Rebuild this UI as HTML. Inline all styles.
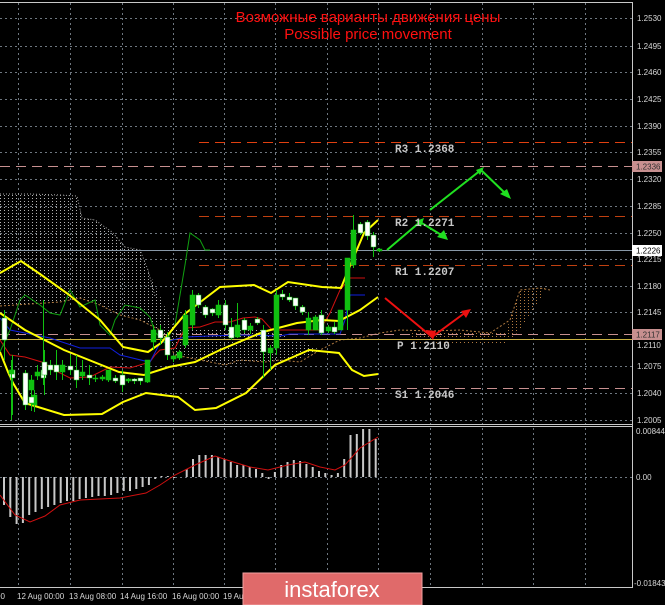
<!DOCTYPE html>
<html><head><meta charset="utf-8"><style>
html,body{margin:0;padding:0;background:#000;width:665px;height:605px;overflow:hidden}
svg{display:block}
.sans{font-family:"Liberation Sans",sans-serif}
.mono{font-family:"Liberation Mono",monospace;font-weight:bold}
</style></head><body>
<svg id="s" width="665" height="605" viewBox="0 0 665 605" xmlns="http://www.w3.org/2000/svg">
<defs>
<pattern id="dots" width="4" height="3" patternUnits="userSpaceOnUse"><rect width="1" height="1" fill="#d0d0d0"/></pattern>
<pattern id="dots2" width="4" height="3" patternUnits="userSpaceOnUse"><rect width="1" height="1" fill="#b07a40"/></pattern>
</defs>
<rect width="665" height="605" fill="#000"/>
<g id="grid" stroke="#8a95a0" stroke-width="1" stroke-dasharray="2,3" opacity="0.8"></g>
<line x1="0" y1="2.5" x2="632" y2="2.5" stroke="#c8c8c8"/>
<line x1="632.5" y1="2" x2="632.5" y2="588" stroke="#c8c8c8"/>
<line x1="0" y1="424.5" x2="632" y2="424.5" stroke="#c8c8c8"/>
<line x1="0" y1="426.5" x2="632" y2="426.5" stroke="#c8c8c8"/>
<line x1="0" y1="587.5" x2="632" y2="587.5" stroke="#c8c8c8"/>
<!-- cloud -->
<polygon points="0,194 77,196 82,218 95,220 112,232 125,247 140,250 148,270 160,296 175,330 200,330 260,330 280,335 300,340 320,350 310,356 280,362 250,363 225,365 200,360 175,355 160,330 140,320 120,315 100,305 80,298 60,302 30,304 0,306" fill="url(#dots)" opacity="0.85"/>
<polygon points="410,333 505,333 510,320 520,290 545,288 540,300 520,330 505,345 410,345" fill="url(#dots2)"/>
<polyline points="0,194 30,194 60,195 77,196 82,218 95,220 112,232 125,247 140,250 148,270 155,296" fill="none" stroke="#aaa" stroke-dasharray="1,2"/>
<polyline points="0,306 30,304 60,302 80,298 100,305 120,315 140,320 160,330 175,355 200,360 225,365 240,360 265,362 280,360 300,362 320,350 340,340 360,338 380,333 400,330 430,331 460,330 490,333 510,320 520,290 540,288 550,290" fill="none" stroke="#b07a40" stroke-dasharray="2,2"/>
<line x1="199" y1="142.5" x2="632" y2="142.5" stroke="#e04010" stroke-dasharray="10,6"/>
<line x1="0" y1="166.5" x2="632" y2="166.5" stroke="#c89090" stroke-dasharray="10,6"/>
<line x1="199" y1="216.5" x2="632" y2="216.5" stroke="#c04010" stroke-dasharray="10,6"/>
<line x1="0" y1="250.5" x2="632" y2="250.5" stroke="#8898a8"/>
<line x1="199" y1="265.5" x2="632" y2="265.5" stroke="#c04010" stroke-dasharray="10,6"/>
<line x1="0" y1="334.5" x2="632" y2="334.5" stroke="#c89090" stroke-dasharray="10,6"/>
<line x1="0" y1="339.5" x2="632" y2="339.5" stroke="#c8b040"/>
<line x1="199" y1="388.5" x2="632" y2="388.5" stroke="#c89090" stroke-dasharray="10,6"/>
<polyline points="0,340 10,355 25,357 45,363 50,368 70,378 90,377 110,367 130,368 150,362 155,355 160,350 175,348 185,328 200,327 215,322 230,322 243,318 255,317 262,319 272,330 300,330 320,330 330,313 340,290 350,278 365,278" fill="none" stroke="#d01010" stroke-width="1"/>
<polyline points="0,318 10,330 50,338 80,348 110,348 120,355 145,361 150,362 160,343 185,337 210,336 240,335 280,336 290,334 310,334 340,334 345,320 350,295 365,295" fill="none" stroke="#1020e0" stroke-width="1"/>
<polyline points="0,352 10,330 20,300 25,295 40,305 50,313 60,315 70,290 80,307 95,300 100,325 110,335 115,320 125,305 140,308 150,317 155,332 165,343 175,325 185,265 190,233 200,240 205,250 210,250" fill="none" stroke="#10a010" stroke-width="1"/>
<polyline points="0,273 21,261 40,274 68,294 100,320 123,347 148,352 161,343 186,313 203,300 220,287 254,285 271,293 288,282 322,287 341,288 347,273 364,233 378,220" fill="none" stroke="#ffff00" stroke-width="2"/>
<polyline points="0,313 25,330 64,350 119,372 144,375 169,367 195,362 220,350 263,332 297,323 322,320 339,321 360,310 378,297" fill="none" stroke="#ffff00" stroke-width="2"/>
<polyline points="0,352 8,372 13,383 25,403 64,415 102,414 123,402 146,393 178,397 195,410 216,408 246,393 275,365 309,350 339,353 352,370 364,376 378,374" fill="none" stroke="#ffff00" stroke-width="2"/>
<g id="candles"></g>
<g stroke="#20e020" stroke-width="2" fill="none">
<polyline points="387,250 420,222 443,236"/>
<polyline points="430,210 481,170 507,195"/>
</g>
<g fill="#20e020"><polygon points="448,240 437,237 444,230"/><polygon points="511,199 500,194 507,189"/><polygon points="424,218 416,221 421,227"/><polygon points="484,167 476,170 480,175"/></g>
<g stroke="#ee1010" stroke-width="2" fill="none"><polyline points="385,298 432,337 466,312"/></g>
<g fill="#ee1010"><polygon points="471,309 461,311 466,318"/><polygon points="433,340 426,330 436,331"/></g>
<g fill="#c8c8c8" font-size="11">
<text class="mono" x="395" y="152">R3 1.2368</text>
<text class="mono" x="395" y="226">R2 1.2271</text>
<text class="mono" x="395" y="275">R1 1.2207</text>
<text class="mono" x="397" y="349">P 1.2110</text>
<text class="mono" x="395" y="398">S1 1.2046</text>
</g>
<text class="sans" x="368" y="22" fill="#ff1010" font-size="15" text-anchor="middle">Возможные варианты движения цены</text>
<text class="sans" x="368" y="39" fill="#ff1010" font-size="15" text-anchor="middle">Possible price movement</text>
<g id="macd" stroke="#c8c8c8" stroke-width="2"></g>
<polyline points="0,495 15,515 30,522 45,516 60,505 80,500 100,499 120,498 146,493 160,485 175,475 195,465 215,456 230,461 250,467 268,470 288,465 305,462 320,467 335,470 345,465 360,448 378,437" fill="none" stroke="#d01010" stroke-width="1"/>
<g id="ax" fill="#d8d8d8" font-size="8" class="sans"></g>
<rect x="632" y="161" width="30" height="11" fill="#c89090"/>
<text class="sans" x="636" y="169.5" fill="#303030" font-size="8">1.2336</text>
<rect x="632" y="245" width="30" height="11" fill="#fff"/>
<text class="sans" x="636" y="253.5" fill="#000" font-size="8">1.2226</text>
<rect x="632" y="329" width="30" height="11" fill="#c89090"/>
<text class="sans" x="636" y="337.5" fill="#303030" font-size="8">1.2117</text>
<text class="sans" x="636" y="434" fill="#d8d8d8" font-size="8">0.00844</text>
<text class="sans" x="636" y="480" fill="#d8d8d8" font-size="8">0.00</text>
<text class="sans" x="634" y="586" fill="#d8d8d8" font-size="8">-0.01843</text>
<g fill="#d8d8d8" font-size="8">
<text class="sans" x="-4" y="599">00</text>
<text class="sans" x="17" y="599">12 Aug 00:00</text>
<text class="sans" x="69" y="599">13 Aug 08:00</text>
<text class="sans" x="120" y="599">14 Aug 16:00</text>
<text class="sans" x="172" y="599">16 Aug 00:00</text>
<text class="sans" x="223" y="599">19 Au</text>
</g>
<rect x="243" y="573" width="179" height="32" fill="#e06a6a" stroke="#f0a0a0"/>
<text class="sans" x="332" y="597" fill="#fff" font-size="22" text-anchor="middle">instaforex</text>
</svg>
<script>
var NS="http://www.w3.org/2000/svg";
function el(p,t,a){var e=document.createElementNS(NS,t);for(var k in a)e.setAttribute(k,a[k]);document.getElementById(p).appendChild(e);return e;}
var vx=[18,70,122,173,224,275,327,378,430,482,533,585];
vx.forEach(function(x){el('grid','line',{x1:x+.5,y1:3,x2:x+.5,y2:588});});
var prices=["1.2530","1.2495","1.2460","1.2425","1.2390","1.2355","1.2320","1.2285","1.2250","1.2215","1.2180","1.2145","1.2110","1.2075","1.2040","1.2005"];
var ys=[18,46,72,99,126,152,179,206,233,259,286,312,339,366,393,420];
ys.forEach(function(y,i){el('grid','line',{x1:0,y1:y+.5,x2:632,y2:y+.5});if(i!=9&&i!=12){var t=el('ax','text',{x:637,y:y+3});t.textContent=prices[i];}});
var t=el('ax','text',{x:637,y:262});t.textContent="1.2215";
var t2=el('ax','text',{x:637,y:348});t2.textContent="1.2110";
el('grid','line',{x1:0,y1:477.5,x2:632,y2:477.5});
var c=[[4,310,360,318,340,1],[12,355,415,370,378,1],[11,360,420,370,374,0],[25,370,410,373,405,1],[34,390,412,395,405,0],[31,395,411,397,403,1],[31,375,395,380,390,0],[43,300,385,370,378,1],[37,365,380,372,376,0],[44,350,395,362,375,1],[50,360,375,365,370,1],[56,350,380,365,372,1],[62,360,380,365,372,0],[70,355,375,366,370,1],[76,355,388,370,380,1],[82,360,380,372,376,0],[89,365,385,375,378,1],[95,375,382,378,379,0],[102,375,381,377,379,0],[108,370,382,370,380,0],[115,375,383,378,381,1],[122,370,392,375,385,1],[128,378,383,379,381,0],[134,378,384,379,381,1],[140,378,385,378,381,1],[147,360,383,360,382,0],[153,325,350,330,342,0],[160,325,345,330,338,1],[167,332,360,337,355,1],[173,355,362,356,359,0],[179,350,360,352,358,0],[185,310,348,315,345,0],[192,290,330,295,325,0],[198,293,308,295,305,1],[205,305,318,307,315,1],[212,308,316,309,313,1],[218,300,318,305,315,0],[225,300,330,305,325,1],[231,318,340,327,338,1],[237,303,338,325,337,0],[244,318,333,320,330,1],[250,323,334,326,330,0],[257,317,325,319,323,1],[263,325,378,330,352,1],[270,345,370,348,353,0],[276,290,355,295,348,0],[282,290,300,294,297,1],[289,293,302,297,300,1],[295,298,310,298,306,1],[302,305,315,307,312,1],[308,312,335,318,330,0],[315,315,330,317,330,0],[321,310,335,315,333,1],[328,325,333,327,331,0],[334,322,334,327,332,1],[340,310,330,310,330,0],[347,258,330,258,310,0],[353,215,268,230,265,0],[360,222,235,224,233,1],[367,220,240,222,236,1],[373,232,257,235,247,1],[379,248,252,249,251,0]];
c.forEach(function(d){var col=d[5]?"#fff":"#10c010";el('candles','line',{x1:d[0]+.5,y1:d[1],x2:d[0]+.5,y2:d[2],stroke:"#10c010","stroke-width":1});el('candles','rect',{x:d[0]-2,y:d[3],width:5,height:Math.max(1,d[4]-d[3]),fill:col,stroke:"#10c010","stroke-width":0.5});});
var h=[-28,-40,-47,-46,-38,-35,-32,-30,-28,-26,-24,-24,-22,-21,-20,-19,-19,-18,-16,-14,-14,-12,-10,-8,-2,1,1,-1,0,8,18,22,22,22,20,18,15,12,12,10,8,4,-2,5,12,15,17,16,13,10,6,4,2,4,18,42,43,48,48,38];
h.forEach(function(v,i){var x=4+i*6.3;el('macd','line',{x1:x,y1:477,x2:x,y2:477-v});});
</script>
</body></html>
